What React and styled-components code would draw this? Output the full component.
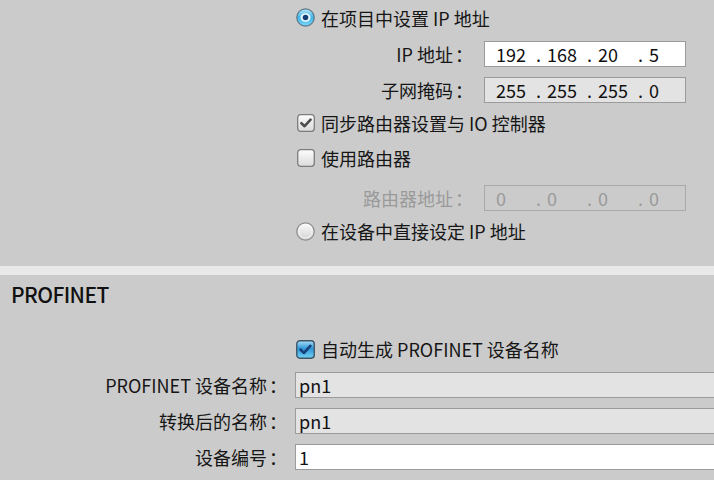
import React from "react";
import styled, { createGlobalStyle } from "styled-components";

const GlobalStyle = createGlobalStyle`
  body {
    margin: 0;
    background: #cbcbcb;
    font-family: "Noto Sans CJK SC", "Noto Sans", sans-serif;
    font-size: 18px;
    color: #161616;
  }
`;

const Page = styled.div`
  width: 714px;
  height: 480px;
  overflow: hidden;
  background: #cbcbcb;
`;

const Section = styled.section`
  display: flex;
  flex-direction: column;
  padding-bottom: ${({ $pb }) => $pb || 0}px;
`;

const Band = styled.div`
  height: 9px;
  background: #e9e9e9;
`;

const Header = styled.h2`
  margin: 0;
  height: 38px;
  display: flex;
  align-items: center;
  padding-left: 11px;
  font-size: 21px;
  font-weight: 500;
  letter-spacing: -0.6px;
  color: #111;
`;

const OptionRow = styled.label`
  display: flex;
  align-items: center;
  gap: 6px;
  height: ${({ $h }) => $h}px;
  margin-top: ${({ $mt }) => $mt || 0}px;
  padding-left: ${({ $indent }) => $indent}px;
  white-space: nowrap;
`;

const FieldRow = styled.div`
  display: grid;
  grid-template-columns: ${({ $labelW }) => $labelW}px 1fr;
  align-items: center;
  height: ${({ $h }) => $h}px;
`;

const Label = styled.span`
  text-align: right;
  padding-right: ${({ $pr }) => $pr}px;
  white-space: nowrap;
  color: ${({ $disabled }) => ($disabled ? "#9a9a9a" : "#161616")};
`;

const Colon = styled.span`
  margin-left: 2px;
`;

const IpBox = styled.div`
  box-sizing: border-box;
  width: 202px;
  height: 26px;
  display: flex;
  align-items: center;
  padding-left: 11px;
  overflow: hidden;
  border: 1px solid ${({ $disabled }) => ($disabled ? "#a9a9a9" : "#9b9b9b")};
  background: ${({ $bg }) => $bg};
  color: ${({ $disabled }) => ($disabled ? "#9a9a9a" : "#111")};
  line-height: 1;
`;

const Octet = styled.span`
  flex: none;
  width: 40px;
`;

const Dot = styled.span`
  flex: none;
  width: 11px;
`;

const TextBox = styled.div`
  box-sizing: border-box;
  width: 440px;
  height: 26px;
  display: flex;
  align-items: center;
  padding-left: 3px;
  border: 1px solid #9b9b9b;
  background: ${({ $bg }) => $bg};
  color: #111;
`;

const Radio = ({ checked }) => (
  <svg width="19" height="19" viewBox="0 0 19 19">
    <defs>
      <linearGradient id="rOn" x1="0" y1="0" x2="0" y2="1">
        <stop offset="0" stopColor="#b9e8fb" />
        <stop offset="0.5" stopColor="#3fb5ea" />
        <stop offset="1" stopColor="#7fd6f6" />
      </linearGradient>
      <linearGradient id="rOff" x1="0" y1="0" x2="0" y2="1">
        <stop offset="0" stopColor="#fbfbfb" />
        <stop offset="1" stopColor="#d2d2d2" />
      </linearGradient>
    </defs>
    {checked ? (
      <>
        <circle cx="9.5" cy="9.5" r="8.7" fill="url(#rOn)" stroke="#5d7585" strokeWidth="1.2" />
        <ellipse cx="9.5" cy="9.5" rx="5" ry="4.2" fill="#eef9fe" />
        <circle cx="9.5" cy="9.5" r="2.8" fill="#123f78" />
      </>
    ) : (
      <>
        <circle cx="9.5" cy="9.5" r="8.7" fill="url(#rOff)" stroke="#8a8a8a" strokeWidth="1.2" />
        <circle cx="9.5" cy="9.5" r="6.6" fill="none" stroke="#ffffff" strokeOpacity="0.6" />
      </>
    )}
  </svg>
);

const Checkbox = ({ checked, active, size = 18 }) => (
  <svg width={size} height={size} viewBox="0 0 18 18">
    <defs>
      <linearGradient id="cOff" x1="0" y1="0" x2="0" y2="1">
        <stop offset="0" stopColor="#fdfdfd" />
        <stop offset="1" stopColor="#dadada" />
      </linearGradient>
      <linearGradient id="cOn" x1="0" y1="0" x2="0" y2="1">
        <stop offset="0" stopColor="#a9def6" />
        <stop offset="0.45" stopColor="#2f97d8" />
        <stop offset="1" stopColor="#74d3f4" />
      </linearGradient>
    </defs>
    <rect
      x="0.7"
      y="0.7"
      width="16.6"
      height="16.6"
      rx="3"
      fill={active ? "url(#cOn)" : "url(#cOff)"}
      stroke={active ? "#3e5566" : "#7c7c7c"}
      strokeWidth="1.3"
    />
    {checked && (
      <path
        d="M4.4 9.2 L7.6 12.2 L13.6 5.6"
        fill="none"
        stroke={active ? "#17407a" : "#4d4d4d"}
        strokeWidth="2.6"
        strokeLinecap="round"
        strokeLinejoin="round"
      />
    )}
  </svg>
);

const IpField = ({ parts, bg, disabled }) => (
  <IpBox $bg={bg} $disabled={disabled}>
    {parts.map((p, i) => (
      <React.Fragment key={i}>
        {i > 0 && <Dot>.</Dot>}
        <Octet>{p}</Octet>
      </React.Fragment>
    ))}
  </IpBox>
);

const FieldLabel = ({ text, pr, disabled }) => (
  <Label $pr={pr} $disabled={disabled}>
    {text}
    <Colon>：</Colon>
  </Label>
);

export default function App() {
  return (
    <Page>
      <GlobalStyle />
      <Section $pb={21}>
        <OptionRow $h={35} $indent={296}>
          <Radio checked />
          在项目中设置 IP 地址
        </OptionRow>
        <FieldRow $h={37} $labelW={484}>
          <FieldLabel text="IP 地址" pr={11} />
          <IpField parts={["192", "168", "20", "5"]} bg="#ffffff" />
        </FieldRow>
        <FieldRow $h={35} $labelW={484}>
          <FieldLabel text="子网掩码" pr={11} />
          <IpField parts={["255", "255", "255", "0"]} bg="#e3e3e3" />
        </FieldRow>
        <OptionRow $h={31} $indent={297}>
          <Checkbox checked />
          同步路由器设置与 IO 控制器
        </OptionRow>
        <OptionRow $h={40} $indent={297}>
          <Checkbox />
          使用路由器
        </OptionRow>
        <FieldRow $h={39} $labelW={484}>
          <FieldLabel text="路由器地址" pr={11} disabled />
          <IpField parts={["0", "0", "0", "0"]} bg="transparent" disabled />
        </FieldRow>
        <OptionRow $h={28} $indent={296}>
          <Radio />
          在设备中直接设定 IP 地址
        </OptionRow>
      </Section>
      <Band />
      <Header>PROFINET</Header>
      <Section>
        <OptionRow $h={36} $mt={18} $indent={296}>
          <Checkbox checked active size={19} />
          自动生成 PROFINET 设备名称
        </OptionRow>
        <FieldRow $h={36} $labelW={295}>
          <FieldLabel text="PROFINET 设备名称" pr={8} />
          <TextBox $bg="#e3e3e3">pn1</TextBox>
        </FieldRow>
        <FieldRow $h={36} $labelW={295}>
          <FieldLabel text="转换后的名称" pr={8} />
          <TextBox $bg="#e3e3e3">pn1</TextBox>
        </FieldRow>
        <FieldRow $h={36} $labelW={295}>
          <FieldLabel text="设备编号" pr={8} />
          <TextBox $bg="#ffffff">1</TextBox>
        </FieldRow>
      </Section>
    </Page>
  );
}
